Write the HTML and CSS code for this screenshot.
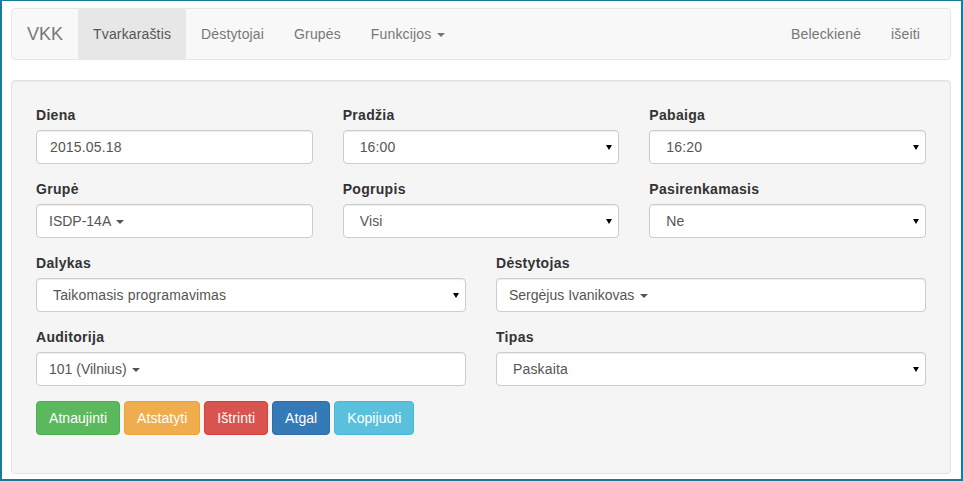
FILE: index.html
```html
<!DOCTYPE html>
<html lang="lt">
<head>
<meta charset="utf-8">
<title>VKK</title>
<link rel="stylesheet" href="styles.css">
</head>
<body>
<div class="frame">
  <nav class="navbar">
    <a class="brand" href="#">VKK</a>
    <ul class="nav">
      <li class="active"><a href="#">Tvarkaraštis</a></li>
      <li><a href="#">Dėstytojai</a></li>
      <li><a href="#">Grupės</a></li>
      <li><a href="#">Funkcijos <span class="caret"></span></a></li>
    </ul>
    <ul class="nav nav-right">
      <li><a href="#">Beleckienė</a></li>
      <li><a href="#">išeiti</a></li>
    </ul>
  </nav>

  <form class="well">
    <div class="row row-3">
      <div class="form-group">
        <label>Diena</label>
        <input class="form-control" type="text" value="2015.05.18">
      </div>
      <div class="form-group">
        <label>Pradžia</label>
        <div class="select-wrap"><select class="form-control select"><option>16:00</option></select></div>
      </div>
      <div class="form-group">
        <label>Pabaiga</label>
        <div class="select-wrap"><select class="form-control select"><option>16:20</option></select></div>
      </div>
    </div>
    <div class="row row-3">
      <div class="form-group">
        <label>Grupė</label>
        <div class="form-control picker">ISDP-14A <span class="caret"></span></div>
      </div>
      <div class="form-group">
        <label>Pogrupis</label>
        <div class="select-wrap"><select class="form-control select"><option>Visi</option></select></div>
      </div>
      <div class="form-group">
        <label>Pasirenkamasis</label>
        <div class="select-wrap"><select class="form-control select"><option>Ne</option></select></div>
      </div>
    </div>
    <div class="row row-2">
      <div class="form-group">
        <label>Dalykas</label>
        <div class="select-wrap"><select class="form-control select"><option>Taikomasis programavimas</option></select></div>
      </div>
      <div class="form-group">
        <label>Dėstytojas</label>
        <div class="form-control picker">Sergėjus Ivanikovas <span class="caret"></span></div>
      </div>
    </div>
    <div class="row row-2">
      <div class="form-group">
        <label>Auditorija</label>
        <div class="form-control picker">101 (Vilnius) <span class="caret"></span></div>
      </div>
      <div class="form-group">
        <label>Tipas</label>
        <div class="select-wrap"><select class="form-control select"><option>Paskaita</option></select></div>
      </div>
    </div>
    <div class="buttons">
      <button type="button" class="btn btn-success">Atnaujinti</button>
      <button type="button" class="btn btn-warning">Atstatyti</button>
      <button type="button" class="btn btn-danger">Ištrinti</button>
      <button type="button" class="btn btn-primary">Atgal</button>
      <button type="button" class="btn btn-info">Kopijuoti</button>
    </div>
  </form>
</div>
</body>
</html>
```

FILE: styles.css
```css
* { box-sizing: border-box; }

html, body {
  margin: 0;
  padding: 0;
  background: #fff;
}

body {
  font-family: "Liberation Sans", Arial, Helvetica, sans-serif;
  font-size: 14px;
  line-height: 20px;
  letter-spacing: 0.15px;
  color: #333;
}

.frame {
  height: 481px;
  overflow: hidden;
  border-style: solid;
  border-color: #1a7a9c;
  border-width: 1px 2px 2px 2px;
  padding: 7px 10px 0 9px;
}

/* Navbar */
.navbar {
  display: flex;
  align-items: stretch;
  height: 52px;
  padding: 0 15px;
  background: #f8f8f8;
  border: 1px solid #e7e7e7;
  border-radius: 4px;
  margin-bottom: 20px;
}

.brand {
  padding: 15px 15px 15px 0;
  font-size: 18px;
  line-height: 20px;
  letter-spacing: 0;
  color: #777;
  text-decoration: none;
}

.nav {
  display: flex;
  list-style: none;
  margin: 0;
  padding: 0;
}

.nav li a {
  display: block;
  padding: 15px;
  line-height: 20px;
  color: #777;
  text-decoration: none;
}

.nav li.active a {
  background: #e7e7e7;
  color: #555;
}

.nav-right {
  margin-left: auto;
}

.caret {
  display: inline-block;
  width: 0;
  height: 0;
  margin-left: 2px;
  vertical-align: middle;
  border-top: 4px solid;
  border-left: 4px solid transparent;
  border-right: 4px solid transparent;
}

/* Well / form */
.well {
  display: block;
  margin: 0;
  padding: 24px 24px 23px 24px;
  background: #f5f5f5;
  border: 1px solid #e3e3e3;
  border-radius: 4px;
  box-shadow: inset 0 1px 1px rgba(0, 0, 0, 0.05);
}

.row {
  display: grid;
  column-gap: 30px;
}

.row-3 { grid-template-columns: 1fr 1fr 1fr; }
.row-2 { grid-template-columns: 1fr 1fr; }

.form-group {
  margin-bottom: 15px;
  min-width: 0;
}

label {
  display: inline-block;
  margin-bottom: 5px;
  font-weight: bold;
  letter-spacing: 0.3px;
  color: #333;
}

.form-control {
  display: block;
  width: 100%;
  height: 34px;
  padding: 6px 12px;
  font-family: inherit;
  font-size: 14px;
  line-height: 20px;
  letter-spacing: 0.15px;
  color: #555;
  background: #fff;
  border: 1px solid #ccc;
  border-radius: 4px;
  box-shadow: inset 0 1px 1px rgba(0, 0, 0, 0.075);
  margin: 0;
}

input.form-control {
  padding-left: 13px;
}

.select-wrap {
  position: relative;
}

.select {
  -webkit-appearance: none;
  appearance: none;
  padding-left: 16px;
  padding-right: 24px;
}

.select-wrap::after {
  content: "";
  position: absolute;
  right: 7px;
  top: 15px;
  width: 0;
  height: 0;
  border-top: 5px solid #000;
  border-left: 3px solid transparent;
  border-right: 3px solid transparent;
  pointer-events: none;
}

.picker {
  padding-left: 12px;
  white-space: nowrap;
  letter-spacing: 0;
}

.picker .caret {
  margin-left: 2px;
  color: #555;
}

/* Buttons */
.buttons {
  display: flex;
  gap: 4px;
  margin-bottom: 15px;
}

.btn {
  display: inline-block;
  padding: 6px 12px;
  font-family: inherit;
  font-size: 14px;
  line-height: 20px;
  letter-spacing: 0.05px;
  color: #fff;
  border: 1px solid transparent;
  border-radius: 4px;
  cursor: pointer;
}

.btn-success { background: #5cb85c; border-color: #4cae4c; }
.btn-warning { background: #f0ad4e; border-color: #eea236; }
.btn-danger  { background: #d9534f; border-color: #d43f3a; }
.btn-primary { background: #337ab7; border-color: #2e6da4; }
.btn-info    { background: #5bc0de; border-color: #46b8da; }
```
